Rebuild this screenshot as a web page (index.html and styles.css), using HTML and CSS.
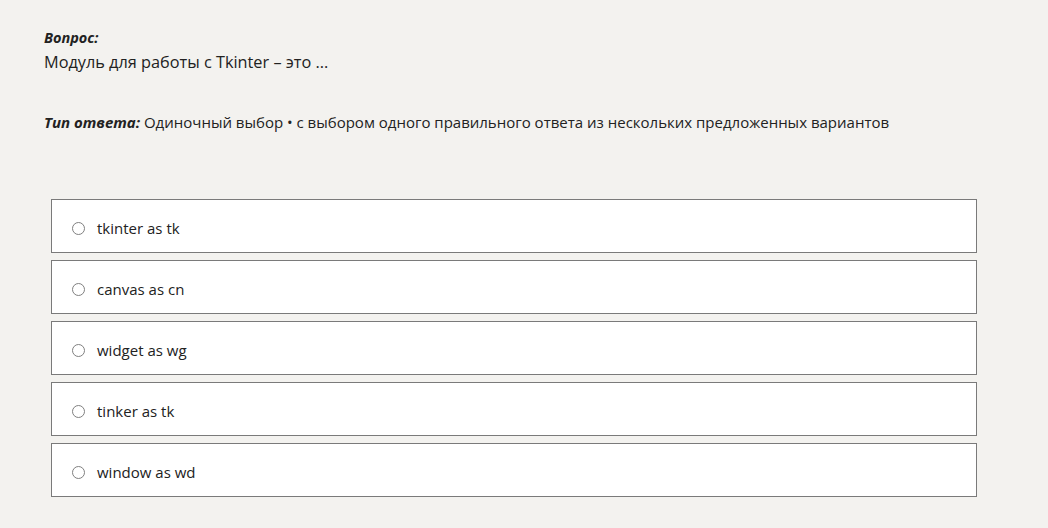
FILE: index.html
```html
<!DOCTYPE html>
<html lang="ru">
<head>
<meta charset="utf-8">
<link rel="stylesheet" href="styles.css">
</head>
<body>
<main class="page">
  <section class="question">
    <div class="label">Вопрос:</div>
    <div class="qtext">Модуль для работы с Tkinter – это ...</div>
  </section>
  <div class="type"><span class="label">Тип ответа:</span> Одиночный выбор • с выбором одного правильного ответа из нескольких предложенных вариантов</div>
  <ul class="options">
    <li class="option"><span class="radio"></span><span class="otext">tkinter as tk</span></li>
    <li class="option"><span class="radio"></span><span class="otext">canvas as cn</span></li>
    <li class="option"><span class="radio"></span><span class="otext">widget as wg</span></li>
    <li class="option"><span class="radio"></span><span class="otext">tinker as tk</span></li>
    <li class="option"><span class="radio"></span><span class="otext">window as wd</span></li>
  </ul>
</main>
</body>
</html>
```
FILE: styles.css
```css
html, body {
  margin: 0;
  padding: 0;
  background: #f3f2ef;
}
body {
  font-family: "Open Sans", "Noto Sans", sans-serif;
  color: #222;
  width: 1048px;
  height: 528px;
  overflow: hidden;
}
.page {
  padding: 28px 0 0 44px;
}
.label {
  font-weight: 700;
  font-style: italic;
  font-size: 14.5px;
}
.question .label {
  line-height: 20px;
}
.qtext {
  font-size: 16.3px;
  line-height: 26px;
  padding-top: 1px;
}
.type {
  margin-top: 36px;
  font-size: 15px;
  line-height: 22px;
}
.type .label {
  font-size: 15px;
}
.options {
  list-style: none;
  margin: 66px 0 0 7px;
  padding: 0;
  width: 926px;
  display: flex;
  flex-direction: column;
  gap: 7px;
}
.option {
  box-sizing: border-box;
  height: 54px;
  background: #fff;
  border: 1px solid #7a7a7a;
  display: flex;
  align-items: center;
  padding: 3px 0 0 20px;
}
.radio {
  box-sizing: border-box;
  width: 13px;
  height: 13px;
  border: 1px solid #7f7f7f;
  border-radius: 50%;
  margin-right: 12px;
  margin-top: 1px;
}
.otext {
  font-size: 15px;
}
```
